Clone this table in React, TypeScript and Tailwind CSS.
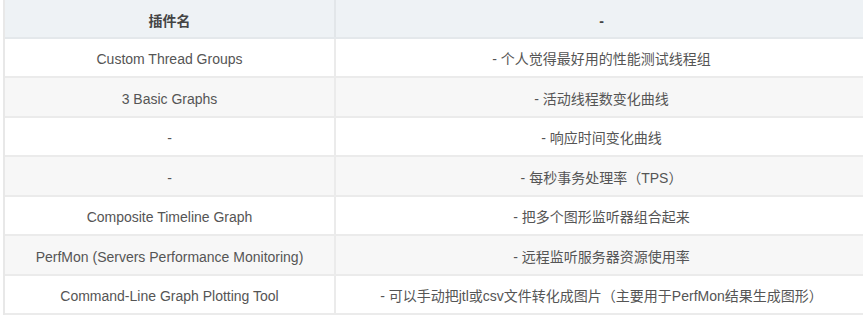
const rows: { name: string; desc: string; h: string }[] = [
  { name: "Custom Thread Groups", desc: "- 个人觉得最好用的性能测试线程组", h: "h-[39px]" },
  { name: "3 Basic Graphs", desc: "- 活动线程数变化曲线", h: "h-[40px]" },
  { name: "-", desc: "- 响应时间变化曲线", h: "h-[39px]" },
  { name: "-", desc: "- 每秒事务处理率（TPS）", h: "h-[40px]" },
  { name: "Composite Timeline Graph", desc: "- 把多个图形监听器组合起来", h: "h-[39px]" },
  { name: "PerfMon (Servers Performance Monitoring)", desc: "- 远程监听服务器资源使用率", h: "h-[40px]" },
  { name: "Command-Line Graph Plotting Tool", desc: "- 可以手动把jtl或csv文件转化成图片（主要用于PerfMon结果生成图形）", h: "h-[39px]" },
];

export default function App() {
  return (
    <div className="w-[863px] h-[323px] overflow-hidden bg-white pl-[3px]">
      <div
        className="w-[864px] border-l-2 border-[#e8e8e8] text-[14px] text-[#555]"
        style={{ fontFamily: '"Liberation Sans", Arial, "Noto Sans CJK SC", sans-serif' }}
      >
        {/* header */}
        <div className="flex h-[39px] bg-[#eef2f5] border-b-2 border-[#e4e8eb] font-bold text-[#444]">
          <div className="w-[331px] pt-[5px] flex items-center justify-center border-r-2 border-[#e2e6e9]">插件名</div>
          <div className="flex-1 pt-[5px] flex items-center justify-center">-</div>
        </div>

        {rows.map((r, i) => (
          <div
            key={i}
            className={`flex ${r.h} border-b-2 border-[#ebebeb] ${i % 2 === 1 ? "bg-[#f7f7f7]" : "bg-white"}`}
          >
            <div className="w-[331px] pt-[4px] flex items-center justify-center border-r-2 border-[#ebebeb]">{r.name}</div>
            <div className="flex-1 pt-[4px] flex items-center justify-center">{r.desc}</div>
          </div>
        ))}
      </div>
    </div>
  );
}
